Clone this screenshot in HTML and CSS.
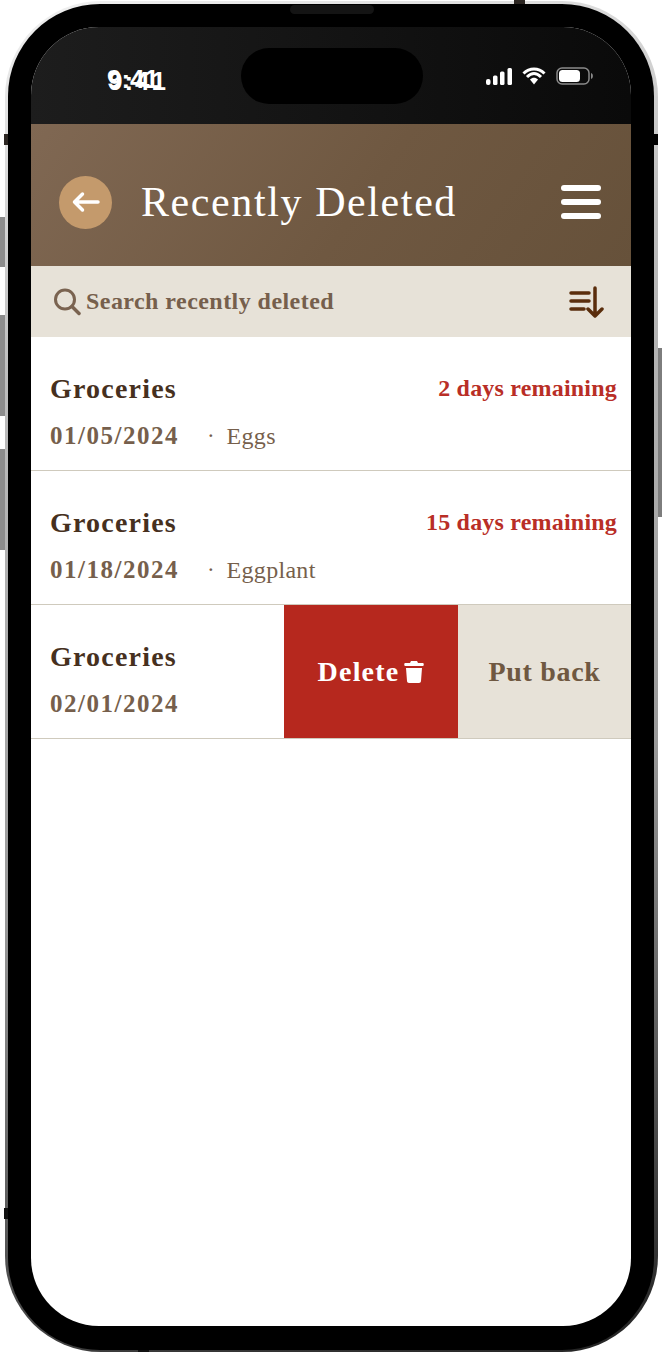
FILE: index.html
```html
<!DOCTYPE html>
<html>
<head>
  <meta charset="utf-8">
  <meta name="viewport" content="width=device-width">
  <title>Recently Deleted</title>
  <link rel="stylesheet" href="styles.css">
</head>
<body>
<div class="frame">
<div class="phone">
  <div class="side-btn mute"></div>
  <div class="side-btn vol-up"></div>
  <div class="side-btn vol-down"></div>
  <div class="side-btn power"></div>
  <div class="band band-lt"></div>
  <div class="band band-rt"></div>
  <div class="band band-lb"></div>
  <div class="band band-top"></div>
  <div class="band band-bottom"></div>
  <div class="speaker"></div>
  <div class="island"></div>

  <div class="screen">
    <div class="status">
      <div class="time" data-ghost="9:41">9:41</div>
      <div class="status-icons">
        <svg width="26" height="17" viewBox="0 0 26 17"><rect x="0" y="11" width="4.500" height="6" rx="2" fill="#fff"/><rect x="7" y="7.500" width="4.500" height="9.500" rx="1.500" fill="#fff"/><rect x="14" y="3.500" width="4.500" height="13.500" rx="1.500" fill="#fff"/><rect x="21.500" y="0" width="4.500" height="17" rx="1.500" fill="#fff"/></svg>
        <svg width="24" height="18" viewBox="0 0 24 18"><path d="M1.500 6.500C7.500 .5 16.500 .5 22.500 6.500M5 10C9.500 5.500 14.500 5.500 19 10" fill="none" stroke="#fff" stroke-width="3"/><path d="M8 12.500C10.500 10 13.500 10 16 12.500L12 17.500Z" fill="#fff"/></svg>
        <svg width="38" height="18" viewBox="0 0 38 18"><rect x="1" y="1" width="32" height="16" rx="5" fill="none" stroke="#8a8a8a" stroke-width="1.500"/><rect x="3" y="3" width="21" height="12" rx="3.500" fill="#fff"/><path d="M35 6C37.500 6.500 37.500 11.500 35 12Z" fill="#8a8a8a"/></svg>
      </div>
    </div>

    <div class="header">
      <div class="back">
        <svg width="28" height="24" viewBox="0 0 28 24"><path d="M10.500 4L2.500 12L10.500 20M2.500 12H26" fill="none" stroke="#fff" stroke-width="3.500" stroke-linecap="round" stroke-linejoin="round"/></svg>
      </div>
      <h1>Recently Deleted</h1>
      <div class="menu"><i></i><i></i><i></i></div>
    </div>

    <div class="search">
      <svg width="28" height="28" viewBox="0 0 28 28"><circle cx="12" cy="11.500" r="9.500" fill="none" stroke="#7a6350" stroke-width="3"/><path d="M19 18.500L26 25.500" stroke="#7a6350" stroke-width="3.500" stroke-linecap="round"/></svg>
      <span class="search-text">Search recently deleted</span>
      <svg width="35" height="32" viewBox="0 0 35 32"><path d="M2 7H20M2 15H20M2 23H15" stroke="#5a2d0c" stroke-width="3.500" stroke-linecap="round"/><path d="M26 2V29M19 23L26 30L33 23" fill="none" stroke="#5a2d0c" stroke-width="3.500" stroke-linecap="round" stroke-linejoin="round"/></svg>
    </div>

    <div class="row">
      <div class="row-main">
        <div class="title">Groceries</div>
        <div class="meta"><span class="date">01/05/2024</span><span class="dot">·</span><span class="item">Eggs</span></div>
      </div>
      <div class="remaining">2 days remaining</div>
    </div>
    <div class="row">
      <div class="row-main">
        <div class="title">Groceries</div>
        <div class="meta"><span class="date">01/18/2024</span><span class="dot">·</span><span class="item">Eggplant</span></div>
      </div>
      <div class="remaining">15 days remaining</div>
    </div>
    <div class="row swiped">
      <div class="row-main">
        <div class="title">Groceries</div>
        <div class="meta"><span class="date">02/01/2024</span></div>
      </div>
      <div class="act delete">Delete
        <svg width="20" height="22" viewBox="0 0 20 22"><path d="M7 0H13L14 2H19C20 2 20 5 19 5H1C0 5 0 2 1 2H6ZM2 7H18L17 20C17 21 16 22 15 22H5C4 22 3 21 3 20Z" fill="#fff"/></svg>
      </div>
      <div class="act putback">Put back</div>
    </div>
  </div>
</div>
</div>
</body>
</html>
```

FILE: styles.css
```css
* {
  box-sizing: border-box;
}
body {
  margin: 0;
  background: #fff;
  font-family: "Liberation Serif", serif;
}
.frame {
  width: 653px;
  height: 1351px;
  margin: 1px 0 0 5px;
  padding: 3px 4px 2px 3px;
  border-radius: 96px;
  background: linear-gradient(165deg, #f2f2f2, #bdbdbd 25%, #9a9a9a 60%, #3c3c3c 90%, #222);
}
.phone {
  position: relative;
  width: 646px;
  height: 1346px;
  padding: 23px;
  background: #000;
  border-radius: 92px;
}
.screen {
  height: 1299px;
  background: #fff;
  border-radius: 68px;
  overflow: hidden;
}
.side-btn {
  position: absolute;
  width: 5px;
  background: #8c8c8c;
}
.mute { left: -8px; top: 213px; height: 50px; }
.vol-up { left: -8px; top: 311px; height: 101px; }
.vol-down { left: -8px; top: 445px; height: 101px; }
.power { right: -8px; top: 344px; height: 169px; width: 4px; background: #7d7d7d; }
/* antenna cuts on the rim */
.band {
  position: absolute;
  background: #2c2622;
}
.band-lt { left: -4px; top: 130px; width: 4px; height: 11px; }
.band-rt { right: -4px; top: 130px; width: 4px; height: 11px; background: #000; }
.band-lb { left: -4px; top: 1204px; width: 4px; height: 11px; background: #111; }
.band-top { left: 506px; top: -4px; width: 11px; height: 4px; }
.band-bottom { left: 130px; bottom: -3px; width: 11px; height: 3px; background: #111; }
.speaker {
  position: absolute;
  left: 282px;
  top: 1px;
  width: 84px;
  height: 9px;
  background: #141414;
  border-radius: 5px;
}
.island {
  position: absolute;
  left: 233px;
  top: 44px;
  width: 182px;
  height: 56px;
  background: #000;
  border-radius: 28px;
  z-index: 2;
}

.status {
  height: 97px;
  padding: 37px 37px 0 76px;
  display: flex;
  justify-content: space-between;
  align-items: flex-start;
  background: linear-gradient(90deg, #1d1d1d, #0a0a0a);
}
.time {
  position: relative;
  font: bold 26px/30px "Liberation Sans", sans-serif;
  color: #fff;
}
.time::after {
  content: attr(data-ghost);
  position: absolute;
  left: 1px;
  top: 2px;
  letter-spacing: 2px;
}
.status-icons {
  display: flex;
  align-items: center;
  gap: 10px;
  height: 20px;
  margin-top: 2px;
}

.header {
  height: 142px;
  padding: 14px 30px 0 28px;
  display: flex;
  align-items: center;
  background: linear-gradient(125deg, #806853, #6f5841 55%, #66513a);
}
.back {
  width: 53px;
  height: 53px;
  border-radius: 50%;
  background: #c49a6c;
  display: flex;
  align-items: center;
  justify-content: center;
}
h1 {
  flex: 1;
  margin: 0 0 0 29px;
  font-size: 42px;
  font-weight: normal;
  letter-spacing: 1.6px;
  color: #fff;
}
.menu {
  display: flex;
  flex-direction: column;
  gap: 8px;
}
.menu i {
  display: block;
  width: 40px;
  height: 6px;
  background: #fff;
  border-radius: 3px;
}

.search {
  height: 71px;
  padding: 0 27px 0 22px;
  display: flex;
  align-items: center;
  background: #e7e2d8;
  color: #765f4c;
}
.search-text {
  flex: 1;
  margin-left: 5px;
  font-size: 24px;
  font-weight: bold;
  letter-spacing: .45px;
}

.row {
  height: 134px;
  padding: 0 14px 0 19px;
  display: flex;
  justify-content: space-between;
  border-bottom: 1px solid #cfcabd;
}
.row-main {
  padding-top: 35px;
}
.title {
  font-size: 28px;
  font-weight: bold;
  line-height: 34px;
  letter-spacing: 1.2px;
  color: #46301e;
}
.meta {
  margin-top: 13px;
  line-height: 34px;
  display: flex;
  color: #765f4c;
}
.date {
  font-size: 25px;
  font-weight: bold;
  letter-spacing: 1.5px;
}
.dot {
  margin: 0 12px 0 28px;
  font-size: 23px;
}
.item {
  font-size: 24px;
  letter-spacing: .3px;
}
.remaining {
  margin-top: 34px;
  font-size: 24px;
  font-weight: bold;
  line-height: 34px;
  letter-spacing: .2px;
  color: #b92e26;
}
.swiped {
  padding-right: 0;
}
.swiped .row-main {
  flex: 1;
}
.act {
  display: flex;
  align-items: center;
  justify-content: center;
  gap: 5px;
  font-size: 28px;
  font-weight: bold;
}
.delete {
  width: 174px;
  background: #b6281e;
  color: #fff;
  letter-spacing: 1.2px;
}
.putback {
  width: 173px;
  background: #e7e2d8;
  color: #6f5841;
  letter-spacing: .7px;
}
```
